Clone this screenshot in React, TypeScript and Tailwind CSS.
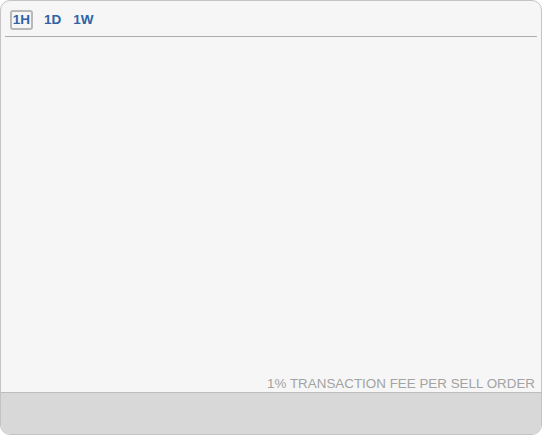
import React from "react";

export default function App() {
  return (
    <div className="w-[542px] h-[435px] bg-white" style={{ fontFamily: '"Liberation Sans", Arial, sans-serif' }}>
      <div className="w-full h-full rounded-[10px] border border-[#c4c4c4] bg-[#f6f6f6] flex flex-col overflow-hidden">
        <div className="flex items-center pl-[9px] pt-[9px] h-[29px] text-[13.5px] font-bold text-[#2f63a6]">
          <div className="h-[20px] w-[23px] flex items-center justify-center rounded-[3px] border-2 border-[#b8b8b8]">1H</div>
          <div className="ml-[11px]">1D</div>
          <div className="ml-[12px]">1W</div>
        </div>
        <div className="mx-[4px] mt-[6px] border-b border-[#ababab]" />
        <div className="flex-1 flex items-end justify-end pr-[6px] pb-[2px]">
          <span className="text-[13.4px] text-[#a3a3a3] leading-none">1% TRANSACTION FEE PER SELL ORDER</span>
        </div>
        <div className="h-[42px] bg-[#d8d8d8] border-t border-[#bdbdbd]" />
      </div>
    </div>
  );
}
